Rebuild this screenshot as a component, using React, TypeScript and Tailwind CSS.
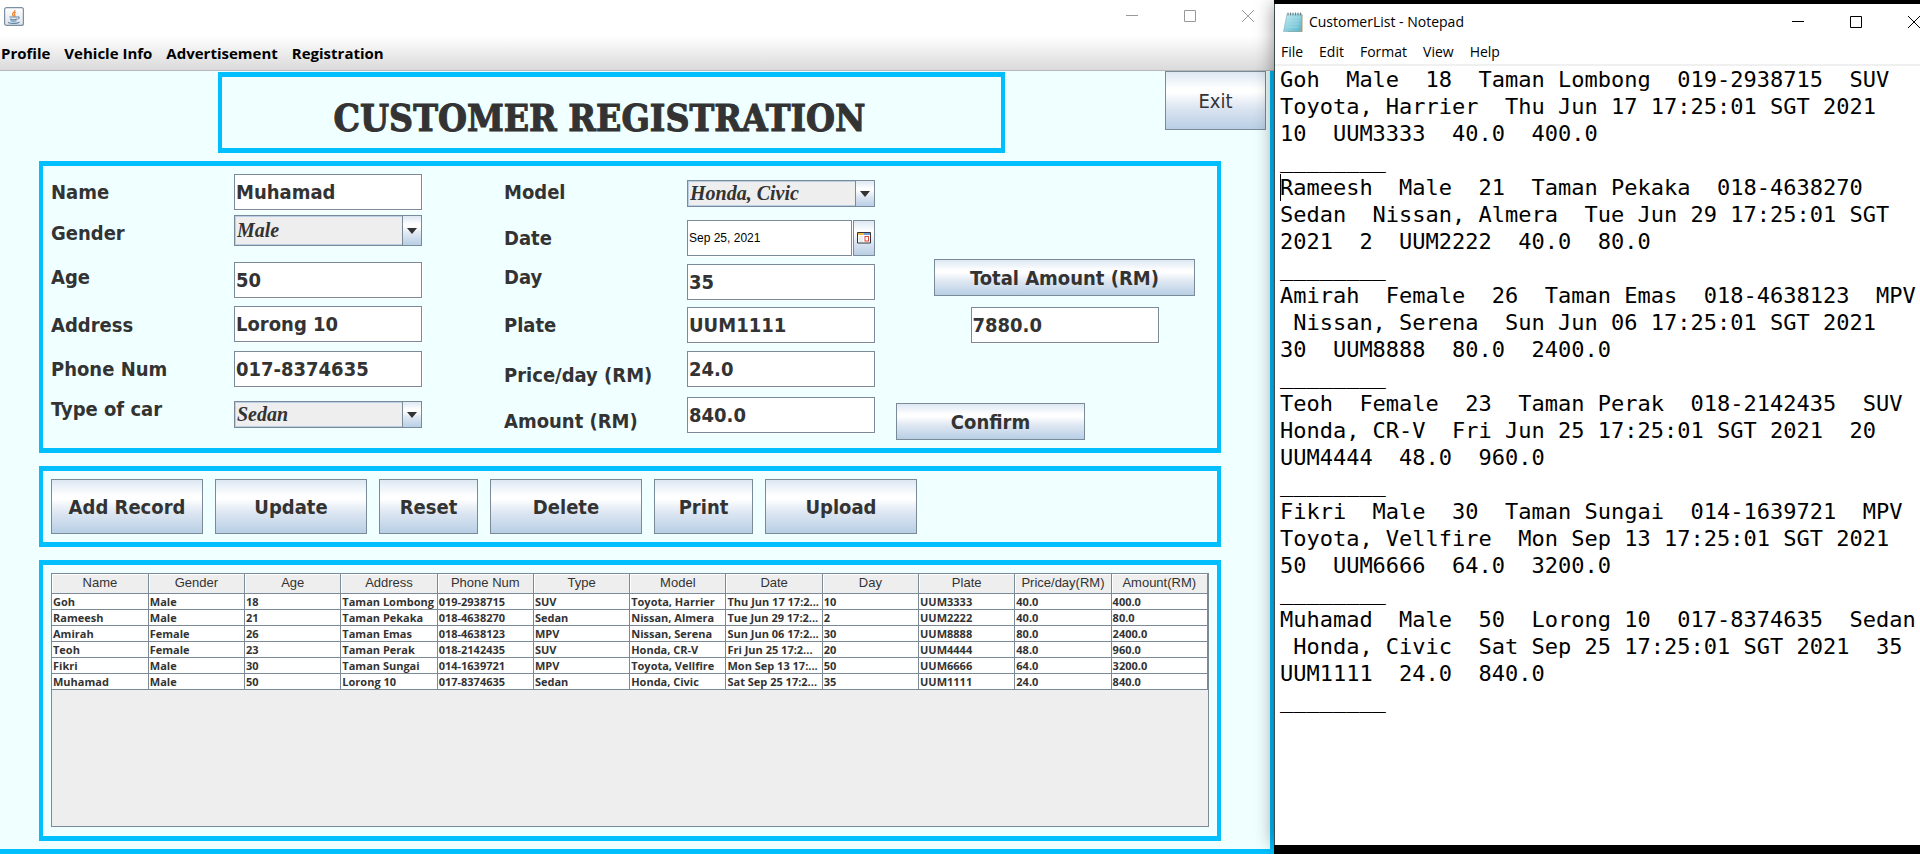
import React from "react";

const headers = ["Name", "Gender", "Age", "Address", "Phone Num", "Type", "Model", "Date", "Day", "Plate", "Price/day(RM)", "Amount(RM)"];

const rows = [
  ["Goh", "Male", "18", "Taman Lombong", "019-2938715", "SUV", "Toyota, Harrier", "Thu Jun 17 17:2...", "10", "UUM3333", "40.0", "400.0"],
  ["Rameesh", "Male", "21", "Taman Pekaka", "018-4638270", "Sedan", "Nissan, Almera", "Tue Jun 29 17:2...", "2", "UUM2222", "40.0", "80.0"],
  ["Amirah", "Female", "26", "Taman Emas", "018-4638123", "MPV", "Nissan, Serena", "Sun Jun 06 17:2...", "30", "UUM8888", "80.0", "2400.0"],
  ["Teoh", "Female", "23", "Taman Perak", "018-2142435", "SUV", "Honda, CR-V", "Fri Jun 25 17:2...", "20", "UUM4444", "48.0", "960.0"],
  ["Fikri", "Male", "30", "Taman Sungai", "014-1639721", "MPV", "Toyota, Vellfire", "Mon Sep 13 17:...", "50", "UUM6666", "64.0", "3200.0"],
  ["Muhamad", "Male", "50", "Lorong 10", "017-8374635", "Sedan", "Honda, Civic", "Sat Sep 25 17:2...", "35", "UUM1111", "24.0", "840.0"],
];

const note = [
  "Goh  Male  18  Taman Lombong  019-2938715  SUV",
  "Toyota, Harrier  Thu Jun 17 17:25:01 SGT 2021",
  "10  UUM3333  40.0  400.0",
  "________",
  "Rameesh  Male  21  Taman Pekaka  018-4638270",
  "Sedan  Nissan, Almera  Tue Jun 29 17:25:01 SGT",
  "2021  2  UUM2222  40.0  80.0",
  "________",
  "Amirah  Female  26  Taman Emas  018-4638123  MPV",
  " Nissan, Serena  Sun Jun 06 17:25:01 SGT 2021",
  "30  UUM8888  80.0  2400.0",
  "________",
  "Teoh  Female  23  Taman Perak  018-2142435  SUV",
  "Honda, CR-V  Fri Jun 25 17:25:01 SGT 2021  20",
  "UUM4444  48.0  960.0",
  "________",
  "Fikri  Male  30  Taman Sungai  014-1639721  MPV",
  "Toyota, Vellfire  Mon Sep 13 17:25:01 SGT 2021",
  "50  UUM6666  64.0  3200.0",
  "________",
  "Muhamad  Male  50  Lorong 10  017-8374635  Sedan",
  " Honda, Civic  Sat Sep 25 17:25:01 SGT 2021  35",
  "UUM1111  24.0  840.0",
  "________",
].join("\n");

const metal = "border border-[#7a8a99] bg-[linear-gradient(to_bottom,#dde8f3_0%,#ffffff_30%,#ffffff_36%,#dde6f2_62%,#b8cfe5_100%)]";
const panel = "border-x-4 border-y-5 border-[#00bfff]";

function FormLabel({ id, children }: { id: string; children: React.ReactNode }) {
  return <label htmlFor={id} className="h-7 whitespace-nowrap text-xl leading-7 font-bold">{children}</label>;
}

function Field({ id, value, label }: { id: string; value: string; label?: string }) {
  return (
    <input
      id={id}
      aria-label={label}
      defaultValue={value}
      className="h-9 w-full rounded-none border border-[#7a8a99] bg-white px-px text-xl font-bold text-[#333] shadow-[1px_1px_0_#fff] outline-none"
    />
  );
}

function Combo({ id, value, options, className }: { id: string; value: string; options: string[]; className: string }) {
  return (
    <div className={`relative w-full ${className}`}>
      <select
        id={id}
        defaultValue={value}
        className="h-full w-full appearance-none rounded-none border border-[#7a8a99] bg-[#eeeeee] pr-6 pb-0.5 pl-0.5 font-['Liberation_Serif',serif] text-[20px] leading-5 font-bold text-[#333] italic shadow-[inset_0_0_0_1px_#b8cfe5] outline-none"
      >
        {options.map((o) => <option key={o}>{o}</option>)}
      </select>
      <span className={`pointer-events-none absolute inset-y-0 right-0 flex w-5 items-center justify-center ${metal}`}>
        <svg width="10" height="6" viewBox="0 0 10 6"><path d="M0 0h10L5 6z" fill="#333" /></svg>
      </span>
    </div>
  );
}

function WindowControls({ color }: { color: string }) {
  return (
    <div className="flex items-center gap-[46px]">
      <button aria-label="Minimize"><svg width="12" height="12" viewBox="0 0 12 12" className="block"><path d="M0 5.500h12" stroke={color} /></svg></button>
      <button aria-label="Maximize"><svg width="12" height="12" viewBox="0 0 12 12" className="block"><path d="M.5.5h11v11H.5z" stroke={color} fill="none" /></svg></button>
      <button aria-label="Close"><svg width="12" height="12" viewBox="0 0 12 12" className="block"><path d="M0 0l12 12M12 0L0 12" stroke={color} fill="none" /></svg></button>
    </div>
  );
}

function JavaIcon() {
  return (
    <svg width="20" height="19" viewBox="0 0 20 19">
      <defs><linearGradient id="jv" x1="0" y1="0" x2="0" y2="1"><stop offset="0" stopColor="#fff" /><stop offset="1" stopColor="#dce3ea" /></linearGradient></defs>
      <rect x=".6" y=".6" width="18.8" height="17.8" rx="2" fill="url(#jv)" stroke="#7c90a5" strokeWidth="1.2" />
      <path d="M10.8 3c.8 1.700-3 2.600-2.200 4.700.3.700.8 1 1 1.600M11.800 5.200c-1.900 1-1.700 1.900-1 2.900.4.600 0 1.200-.6 1.600" stroke="#ee8b3a" strokeWidth="1.300" fill="none" />
      <path d="M5.500 10h7.500M6 12c2 .8 5 .8 7 0M6.500 13.800c2 .6 4 .6 6 0M4 15.400c3 1.300 8.500 1.300 11.500-.2M13.300 10c2.400-.7 2.600 1.600 0 2.300" stroke="#5f83a6" strokeWidth="1.100" fill="none" />
    </svg>
  );
}

function NotepadIcon() {
  return (
    <svg width="20" height="21" viewBox="0 0 20 21">
      <defs><linearGradient id="np" x1="0" y1="0" x2="1" y2="1"><stop offset="0" stopColor="#c6eef4" /><stop offset="1" stopColor="#58b4c9" /></linearGradient></defs>
      <path d="M5 3h14.500v17H5z" fill="#b79b72" />
      <path d="M4 2h15l-1.500 17.500H.5z" fill="url(#np)" stroke="#7cb3c0" strokeWidth=".6" />
      <path d="M4.500 6h12M4 9h12M3.500 12h12M3 15h12" stroke="#a9e0ea" strokeWidth=".7" />
      <path d="M5 .5v3M7.500.5v3M10 .5v3M12.500.5v3M15 .5v3M17.500.5v3" stroke="#6d7f86" strokeWidth="1" />
    </svg>
  );
}

export default function App() {
  return (
    <div className="flex min-h-screen overflow-hidden bg-black font-['DejaVu_Sans_Condensed','Noto_Sans',sans-serif] text-[#333]">
      <main className="flex w-[66.35%] shrink-0 flex-col bg-white">
        <header className="flex h-8 items-center justify-between pr-5 pl-1">
          <JavaIcon />
          <WindowControls color="#999" />
        </header>
        <nav className="flex h-[39px] items-center gap-3.5 border-b border-[#b8b8b8] bg-[linear-gradient(to_bottom,#fff_0%,#fff_10%,#dadada_100%)] pt-1 pl-px font-['Open_Sans',sans-serif] text-[15px] leading-5 font-bold text-black">
          <button>Profile</button>
          <button>Vehicle Info</button>
          <button>Advertisement</button>
          <button>Registration</button>
        </nav>

        <div className="flex flex-1 flex-col border-r-4 border-b-5 border-[#00bfff] bg-[#f0ffff] pb-2">
          <div className="flex h-[90px] items-start justify-between pr-1 pl-[218px]">
            <h1 className={`mt-px flex h-[81px] w-[787px] items-center justify-center pt-2.5 pr-6 font-['DejaVu_Serif_Condensed','DejaVu_Serif',serif] text-[37px] leading-10 font-bold whitespace-nowrap [-webkit-text-stroke:1px_#333] ${panel}`}>
              CUSTOMER REGISTRATION
            </h1>
            <button className={`h-[59px] w-[101px] text-xl ${metal}`}>Exit</button>
          </div>

          <div className="flex flex-1 flex-col gap-[13px] pr-[49px] pl-[39px]">
            <form className={`flex h-[292px] items-start pt-2 pl-2 ${panel}`} onSubmit={(e) => e.preventDefault()}>
              <div className="grid w-[183px] grid-rows-[41px_44px_48px_44px_40px_28px] pt-1">
                <FormLabel id="name">Name</FormLabel>
                <FormLabel id="gender">Gender</FormLabel>
                <FormLabel id="age">Age</FormLabel>
                <FormLabel id="address">Address</FormLabel>
                <FormLabel id="phone">Phone Num</FormLabel>
                <FormLabel id="type">Type of car</FormLabel>
              </div>
              <div className="grid w-[188px] grid-cols-1 grid-rows-[41px_47px_44px_45px_50px_27px]">
                <Field id="name" value="Muhamad" />
                <Combo id="gender" value="Male" options={["Male", "Female"]} className="h-[31px]" />
                <Field id="age" value="50" />
                <Field id="address" value="Lorong 10" />
                <Field id="phone" value="017-8374635" />
                <Combo id="type" value="Sedan" options={["Sedan", "SUV", "MPV"]} className="h-[27px]" />
              </div>
              <div className="ml-[82px] grid w-[183px] grid-rows-[46px_39px_48px_50px_46px_28px] pt-1">
                <FormLabel id="model">Model</FormLabel>
                <FormLabel id="date">Date</FormLabel>
                <FormLabel id="day">Day</FormLabel>
                <FormLabel id="plate">Plate</FormLabel>
                <FormLabel id="price">Price/day (RM)</FormLabel>
                <FormLabel id="amount">Amount (RM)</FormLabel>
              </div>
              <div className="grid w-[188px] grid-cols-1 grid-rows-[40px_44px_43px_44px_46px_36px] pt-1.5">
                <Combo id="model" value="Honda, Civic" options={["Honda, Civic", "Honda, CR-V", "Nissan, Almera"]} className="h-[27px]" />
                <div className="flex h-9 gap-px">
                  <input id="date" defaultValue="Sep 25, 2021" className="min-w-0 flex-1 rounded-none border border-[#7a8a99] bg-white px-px font-['Liberation_Sans',sans-serif] text-[12px] text-black shadow-[1px_1px_0_#fff] outline-none" />
                  <button type="button" aria-label="Pick date" className={`flex w-[22px] items-center justify-center ${metal}`}>
                    <svg width="14" height="12" viewBox="0 0 14 12">
                      <path d="M.5.5h13v10.500H.5z" fill="#fff" stroke="#333" />
                      <path d="M1 1h6v2H1z" fill="#f5b649" />
                      <path d="M7 1h6v2H7z" fill="#6f9bd8" />
                      <path d="M2 5h4M2 7h4M2 9h4" stroke="#d8dde4" />
                      <rect x="8" y="4.500" width="3.500" height="4.500" fill="none" stroke="#d9443c" />
                    </svg>
                  </button>
                </div>
                <Field id="day" value="35" />
                <Field id="plate" value="UUM1111" />
                <Field id="price" value="24.0" />
                <Field id="amount" value="840.0" />
              </div>
              <div className="ml-[21px] flex flex-col items-start pt-[85px]">
                <div className="ml-[38px] flex flex-col items-center gap-[11px]">
                  <button type="button" className={`h-[37px] w-[261px] text-xl font-bold ${metal}`}>Total Amount (RM)</button>
                  <div className="w-[188px]"><Field id="total" value="7880.0" label="Total Amount (RM)" /></div>
                </div>
                <button type="button" className={`mt-15 h-[37px] w-[189px] text-xl font-bold ${metal}`}>Confirm</button>
              </div>
            </form>

            <div className={`flex h-[81px] items-center gap-3 pl-2 text-xl font-bold ${panel}`}>
              <button className={`h-[55px] w-[152px] ${metal}`}>Add Record</button>
              <button className={`h-[55px] w-[152px] ${metal}`}>Update</button>
              <button className={`h-[55px] w-[99px] ${metal}`}>Reset</button>
              <button className={`h-[55px] w-[152px] ${metal}`}>Delete</button>
              <button className={`h-[55px] w-[99px] ${metal}`}>Print</button>
              <button className={`h-[55px] w-[152px] ${metal}`}>Upload</button>
            </div>

            <div className={`flex flex-1 flex-col px-2 pt-2 pb-[9px] ${panel}`}>
              <div className="flex-1 border border-[#7a8a99] bg-[#eeeeee]">
                <table className="w-full table-fixed border-collapse">
                  <thead>
                    <tr className="h-[19px]">
                      {headers.map((h) => (
                        <th key={h} className="border-r border-b border-[#7a8a99] p-0 font-['Liberation_Sans',sans-serif] text-[13px] leading-[18px] font-normal shadow-[inset_1px_1px_0_#fff]">{h}</th>
                      ))}
                    </tr>
                  </thead>
                  <tbody>
                    {rows.map((r) => (
                      <tr key={r[0]} className="h-4 bg-white">
                        {r.map((c, i) => (
                          <td key={i} className="overflow-hidden border-r border-b border-[#7a8a99] p-0 pl-px font-['Open_Sans',sans-serif] text-[11px] leading-[15px] font-bold whitespace-nowrap">{c}</td>
                        ))}
                      </tr>
                    ))}
                  </tbody>
                </table>
              </div>
            </div>
          </div>
        </div>
      </main>

      <section className="relative z-10 mt-1 mb-[9px] flex min-w-0 flex-1 flex-col border-l border-[#3c4a50] bg-white text-black shadow-[0_0_18px_rgba(0,0,0,0.45)]">
        <header className="flex h-9 items-center justify-between pl-2 font-['Open_Sans',sans-serif] text-[14px] leading-5">
          <div className="flex items-center gap-1.5">
            <NotepadIcon />
            <span>CustomerList - Notepad</span>
          </div>
          <WindowControls color="#000" />
        </header>
        <nav className="flex h-[26px] items-center gap-4 border-b-2 border-[#f0f0f0] pl-1.5 font-['Open_Sans',sans-serif] text-[14px] leading-5">
          <button>File</button>
          <button>Edit</button>
          <button>Format</button>
          <button>View</button>
          <button>Help</button>
        </nav>
        <div className="relative flex flex-1">
          <textarea
            aria-label="CustomerList"
            defaultValue={note}
            spellCheck={false}
            className="w-full flex-1 resize-none overflow-hidden bg-white pl-[5px] font-['DejaVu_Sans_Mono',monospace] text-[22px] leading-[27px] whitespace-pre text-black outline-none"
          />
          <span className="absolute top-[108px] left-[5px] h-[27px] w-px bg-black" />
        </div>
      </section>
    </div>
  );
}
